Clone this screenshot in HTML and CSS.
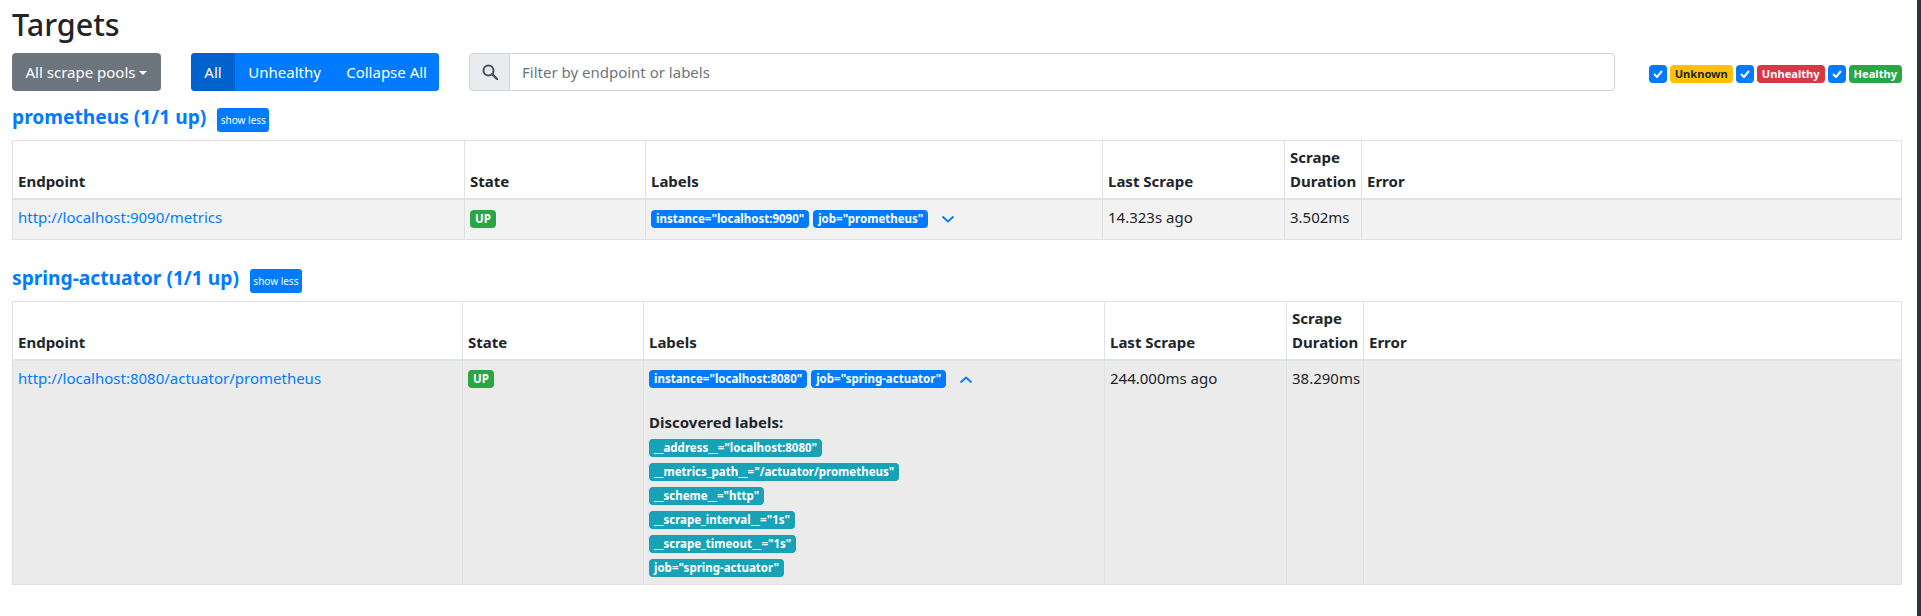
FILE: index.html
```html
<!DOCTYPE html>
<html lang="en">
<head>
  <meta charset="UTF-8" />
  <title>Prometheus Targets</title>
  <link rel="stylesheet" href="styles.css">
</head>
<body>
  <div class="page-edge"></div>
  <h1>Targets</h1>

  <div class="toolbar">
    <button class="btn btn-grey pools">All scrape pools<span class="caret"></span></button>
    <div class="btn-group">
      <button class="btn btn-blue active">All</button>
      <button class="btn btn-blue">Unhealthy</button>
      <button class="btn btn-blue">Collapse All</button>
    </div>
    <div class="search">
      <span class="search-icon">
        <svg width="16" height="16" viewBox="0 0 16 16"><circle cx="6.5" cy="6.5" r="5" fill="none" stroke="#495057" stroke-width="2"/><path d="M10.2 10.2L15 15" stroke="#495057" stroke-width="2.4" stroke-linecap="round"/></svg>
      </span>
      <input type="text" placeholder="Filter by endpoint or labels" />
    </div>
    <div class="filters">
      <span class="check"><svg width="10" height="8" viewBox="0 0 10 8"><path d="M1 4l3 3 5-6" fill="none" stroke="#fff" stroke-width="2"/></svg></span>
      <span class="badge badge-yellow">Unknown</span>
      <span class="check"><svg width="10" height="8" viewBox="0 0 10 8"><path d="M1 4l3 3 5-6" fill="none" stroke="#fff" stroke-width="2"/></svg></span>
      <span class="badge badge-red">Unhealthy</span>
      <span class="check"><svg width="10" height="8" viewBox="0 0 10 8"><path d="M1 4l3 3 5-6" fill="none" stroke="#fff" stroke-width="2"/></svg></span>
      <span class="badge badge-green">Healthy</span>
    </div>
  </div>

  <div class="pool-title">
    <a href="#">prometheus (1/1 up)</a>
    <button class="btn-less">show less</button>
  </div>
  <table class="targets first">
    <colgroup>
      <col class="c1"><col class="c2"><col class="c3"><col class="c4"><col class="c5"><col>
    </colgroup>
    <thead>
      <tr>
        <th>Endpoint</th>
        <th>State</th>
        <th>Labels</th>
        <th>Last Scrape</th>
        <th>Scrape Duration</th>
        <th>Error</th>
      </tr>
    </thead>
    <tbody>
      <tr>
        <td><a href="#">http://localhost:9090/metrics</a></td>
        <td><span class="badge badge-green">UP</span></td>
        <td>
          <span class="badge badge-blue">instance="localhost:9090"</span>
          <span class="badge badge-blue">job="prometheus"</span>
          <svg class="chevron" width="14" height="8" viewBox="0 0 14 8"><path d="M1.5 1.5l5.5 5 5.5-5" fill="none" stroke="#007bff" stroke-width="1.8"/></svg>
        </td>
        <td>14.323s ago</td>
        <td>3.502ms</td>
        <td></td>
      </tr>
    </tbody>
  </table>

  <div class="pool-title second-title">
    <a href="#">spring-actuator (1/1 up)</a>
    <button class="btn-less">show less</button>
  </div>
  <table class="targets second">
    <colgroup>
      <col class="c1"><col class="c2"><col class="c3"><col class="c4"><col class="c5"><col>
    </colgroup>
    <thead>
      <tr>
        <th>Endpoint</th>
        <th>State</th>
        <th>Labels</th>
        <th>Last Scrape</th>
        <th>Scrape Duration</th>
        <th>Error</th>
      </tr>
    </thead>
    <tbody>
      <tr>
        <td><a href="#">http://localhost:8080/actuator/prometheus</a></td>
        <td><span class="badge badge-green">UP</span></td>
        <td>
          <span class="badge badge-blue">instance="localhost:8080"</span>
          <span class="badge badge-blue">job="spring-actuator"</span>
          <svg class="chevron" width="14" height="8" viewBox="0 0 14 8"><path d="M1.5 6.5l5.5-5 5.5 5" fill="none" stroke="#007bff" stroke-width="1.8"/></svg>
          <div class="discovered">
            <b>Discovered labels:</b>
            <div><span class="badge badge-teal">__address__="localhost:8080"</span></div>
            <div><span class="badge badge-teal">__metrics_path__="/actuator/prometheus"</span></div>
            <div><span class="badge badge-teal">__scheme__="http"</span></div>
            <div><span class="badge badge-teal">__scrape_interval__="1s"</span></div>
            <div><span class="badge badge-teal">__scrape_timeout__="1s"</span></div>
            <div><span class="badge badge-teal">job="spring-actuator"</span></div>
          </div>
        </td>
        <td>244.000ms ago</td>
        <td>38.290ms</td>
        <td></td>
      </tr>
    </tbody>
  </table>
</body>
</html>
```

FILE: styles.css
```css
* {
  box-sizing: border-box;
}
body {
  margin: 0;
  padding: 0 19px 0 12px;
  font-family: "Noto Sans", "Open Sans", sans-serif;
  font-size: 15px;
  line-height: 24px;
  color: #212529;
  background: #fff;
}
a {
  color: #007bff;
  text-decoration: none;
}
.page-edge {
  position: fixed;
  top: 0;
  right: 0;
  bottom: 0;
  width: 4px;
  background: #2c3341;
}
h1 {
  margin: 0;
  height: 53px;
  font-size: 30.5px;
  font-weight: 500;
  line-height: 48px;
}
.toolbar {
  display: flex;
  align-items: center;
  height: 38px;
}
.btn {
  height: 38px;
  padding: 0 12px;
  border: none;
  border-radius: 4px;
  font-family: inherit;
  font-size: 15px;
  white-space: nowrap;
  color: #fff;
}
.btn-grey {
  background: #6c757d;
}
.pools {
  width: 149px;
}
.caret {
  display: inline-block;
  margin-left: 4px;
  vertical-align: 3px;
  border-top: 4px solid #fff;
  border-left: 4px solid transparent;
  border-right: 4px solid transparent;
}
.btn-group {
  display: flex;
  justify-content: space-between;
  width: 248px;
  margin-left: 30px;
  background: #007bff;
  border-radius: 4px;
}
.btn-blue {
  background: #007bff;
}
.btn-blue.active {
  width: 44px;
  padding: 0;
  background: #0062cc;
  border-radius: 4px 0 0 4px;
}
.search {
  display: flex;
  width: 1146px;
  height: 38px;
  margin-left: 30px;
}
.search-icon {
  display: flex;
  align-items: center;
  justify-content: center;
  width: 41px;
  background: #e9ecef;
  border: 1px solid #ced4da;
  border-radius: 4px 0 0 4px;
}
.search input {
  flex: 1;
  padding: 0 12px;
  border: 1px solid #ced4da;
  border-left: none;
  border-radius: 0 4px 4px 0;
  font-family: inherit;
  font-size: 15px;
  outline: none;
}
.search input::placeholder {
  color: #6c757d;
}
.filters {
  display: flex;
  align-items: center;
  margin-left: auto;
  margin-top: 3px;
  gap: 3px;
}
.check {
  display: flex;
  align-items: center;
  justify-content: center;
  width: 18px;
  height: 18px;
  background: #007bff;
  border-radius: 4px;
}
.badge {
  display: inline-block;
  padding: 0 5px;
  height: 18px;
  border-radius: 4px;
  font-size: 11.5px;
  font-weight: 700;
  line-height: 18px;
  white-space: nowrap;
  color: #fff;
  vertical-align: middle;
}
.filters .badge {
  font-size: 11.1px;
}
.badge-yellow {
  background: #ffc107;
  color: #212529;
}
.badge-red {
  background: #dc3545;
}
.badge-green {
  background: #28a745;
}
.badge-blue {
  background: #007bff;
}
.badge-teal {
  background: #17a2b8;
}
.pool-title {
  display: flex;
  align-items: flex-start;
  gap: 11px;
  height: 24px;
  margin: 17px 0 8px;
  font-size: 19.2px;
  font-weight: 700;
  line-height: 18px;
}
.second-title {
  margin-top: 29px;
}
.btn-less {
  width: 52px;
  height: 24px;
  padding: 0;
  border: none;
  border-radius: 3px;
  background: #007bff;
  color: #fff;
  font-family: inherit;
  font-size: 10px;
}
.targets {
  width: 100%;
  table-layout: fixed;
  border-collapse: collapse;
}
.targets th,
.targets td {
  padding: 5px;
  border: 1px solid #dee2e6;
  text-align: left;
  vertical-align: top;
}
.targets th {
  padding-top: 4px;
  vertical-align: bottom;
  font-weight: 700;
  border-bottom-width: 2px;
}
.first tbody tr {
  background: #f2f2f2;
}
.first td {
  height: 40px;
}
.second tbody tr {
  background: #ebebeb;
}
.first .c1 { width: 452px; }
.first .c2 { width: 181px; }
.first .c3 { width: 457px; }
.first .c4 { width: 182px; }
.first .c5 { width: 77px; }
.second .c1 { width: 450px; }
.second .c2 { width: 181px; }
.second .c3 { width: 461px; }
.second .c4 { width: 182px; }
.second .c5 { width: 77px; }
.targets .chevron {
  margin-left: 9px;
}
.discovered {
  margin-top: 20px;
}
.discovered b {
  display: block;
  margin-bottom: 1px;
}
.discovered div {
  height: 24px;
}
```
